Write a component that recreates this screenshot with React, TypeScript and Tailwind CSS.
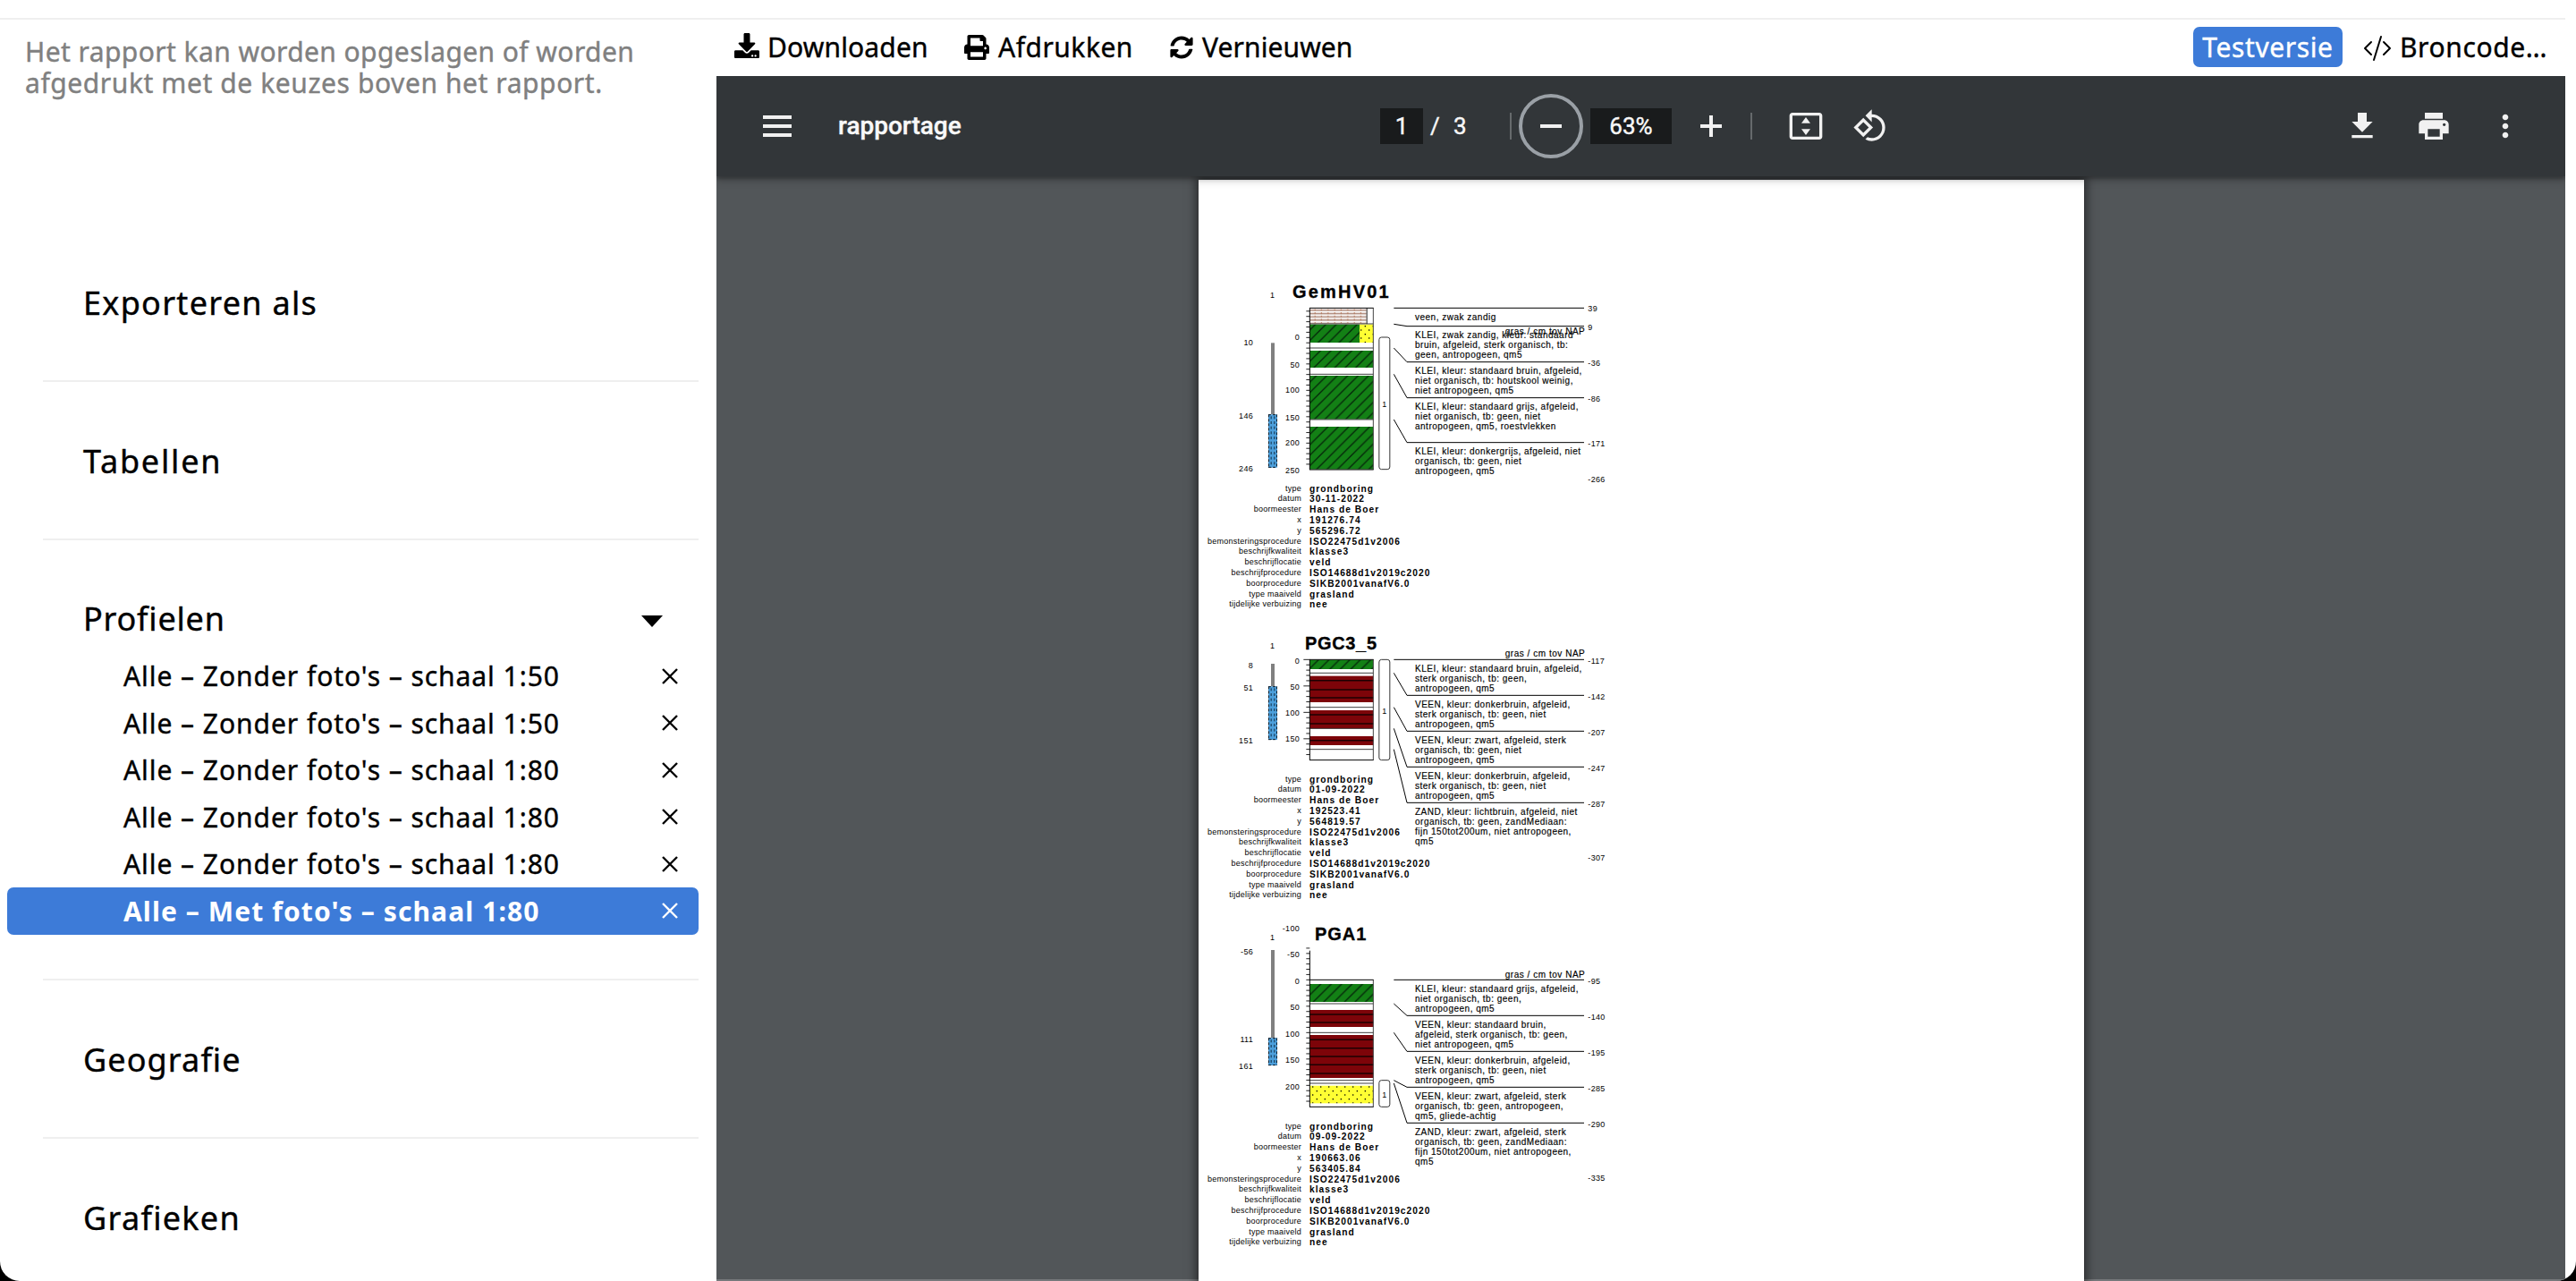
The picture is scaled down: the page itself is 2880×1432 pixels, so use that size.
import React from "react";
import { FaDownload, FaPrint, FaSyncAlt } from "react-icons/fa";
import { BsCodeSlash } from "react-icons/bs";

type Item = { label: string; active?: boolean };

const profiles: Item[] = [
  { label: "Alle – Zonder foto's – schaal 1:50" },
  { label: "Alle – Zonder foto's – schaal 1:50" },
  { label: "Alle – Zonder foto's – schaal 1:80" },
  { label: "Alle – Zonder foto's – schaal 1:80" },
  { label: "Alle – Zonder foto's – schaal 1:80" },
  { label: "Alle – Met foto's – schaal 1:80", active: true },
];

function Cross() {
  return (
    <svg viewBox="0 0 18 18" className="h-[18px] w-[18px]" fill="none" stroke="currentColor" strokeWidth="2.4">
      <path d="M1 1l16 16M17 1L1 17" />
    </svg>
  );
}

function NavSection({ label, spacing }: { label: string; spacing: string }) {
  return (
    <div className="ml-[48px] mr-[20px] flex h-[177px] items-center border-b-2 border-[#efefef] pl-[45px] pt-[2px] text-[36px]">
      <span className={spacing}>{label}</span>
    </div>
  );
}

function Sidebar() {
  return (
    <aside className="flex w-[801px] shrink-0 flex-col [-webkit-text-stroke:0.4px]">
      <p className="h-[228px] whitespace-nowrap pl-[28px] pt-[18px] text-[30px] leading-[35.3px] tracking-[0.42px] text-[#808080]">
        Het rapport kan worden opgeslagen of worden
        <br />
        <span className="tracking-[0.58px]">afgedrukt met de keuzes boven het rapport.</span>
      </p>
      <NavSection label="Exporteren als" spacing="tracking-[1.3px]" />
      <NavSection label="Tabellen" spacing="tracking-[1.8px]" />
      <div>
        <div className="flex h-[125.5px] items-center justify-between pl-[93px] pr-[60px] pt-[51px] text-[36px] tracking-[0.8px]">
          <span>Profielen</span>
          <svg viewBox="0 0 24 13" className="mt-[4px] h-[13px] w-[24px]">
            <path d="M0 0h24L12 13z" />
          </svg>
        </div>
        <ul className="ml-[8px] mr-[20px]">
          {profiles.map((p, i) => (
            <li
              key={i}
              className={
                p.active
                  ? "flex h-[52.5px] items-center justify-between rounded-[7px] bg-[#3d7bd8] pl-[130px] pr-[23px] text-[30px] font-bold tracking-[1.1px] text-white [-webkit-text-stroke:0]"
                  : "flex h-[52.5px] items-center justify-between pl-[130px] pr-[23px] text-[30px] tracking-[0.95px]"
              }
            >
              <span>{p.label}</span>
              <Cross />
            </li>
          ))}
        </ul>
        <div className="ml-[48px] mr-[20px] h-[51.5px] border-b-2 border-[#efefef]" />
      </div>
      <NavSection label="Geografie" spacing="tracking-[1.1px]" />
      <div className="pl-[93px] pt-[62px] text-[36px] tracking-[1.3px]">Grafieken</div>
    </aside>
  );
}

function ActionBar() {
  return (
    <div className="flex h-[63px] items-center whitespace-nowrap pb-[3px] pl-[20px] text-[30px] [-webkit-text-stroke:0.4px]">
      <FaDownload className="mb-[2px] h-[28px] w-[28px]" />
      <span className="ml-[9px] w-[220px] tracking-[0.15px]">Downloaden</span>
      <FaPrint className="mt-[2px] h-[28px] w-[28px]" />
      <span className="ml-[10px] w-[192px] tracking-[0.5px]">Afdrukken</span>
      <FaSyncAlt className="mt-[2px] h-[26px] w-[26px]" />
      <span className="ml-[10px] tracking-[0.1px]">Vernieuwen</span>
      <span className="ml-auto flex h-[45px] w-[167px] items-center justify-center rounded-[7px] bg-[#3d7bd8] tracking-[0.6px] text-white">
        Testversie
      </span>
      <BsCodeSlash className="ml-[23px] mt-[4px] h-[32px] w-[32px]" />
      <span className="ml-[9px] w-[185px] tracking-[0.6px]">Broncode…</span>
    </div>
  );
}

function ToolIcon({ d, box = "0 0 24 24" }: { d: string; box?: string }) {
  return (
    <svg viewBox={box} className="h-[40px] w-[40px] shrink-0 fill-[#f1f1f1]">
      <path d={d} fillRule="evenodd" />
    </svg>
  );
}

function PdfToolbar() {
  return (
    <div className="relative z-10 flex h-[112px] shrink-0 items-center bg-[#323639] pl-[48px] pr-[47px] font-[Roboto,sans-serif] text-[26px] text-[#f8f8f8] shadow-[0_-4px_8px_rgba(0,0,0,0.09),0_6px_8px_rgba(0,0,0,0.15),0_3px_4px_rgba(0,0,0,0.25)]">
      <ToolIcon box="0 0 20 20" d="M2 4h16v2H2zM2 9h16v2H2zM2 14h16v2H2z" />
      <span className="ml-[48px] w-[606px] text-[28px] font-medium [-webkit-text-stroke:0.4px]">rapportage</span>
      <span className="flex h-[40px] w-[48px] items-center justify-center bg-[#191b1c] [-webkit-text-stroke:0.4px]">1</span>
      <span className="ml-[8px] w-[26px] [-webkit-text-stroke:0.4px]">/</span>
      <span className="w-[63px] [-webkit-text-stroke:0.4px]">3</span>
      <span className="h-[30px] w-[2px] bg-[#666a6c]" />
      <span className="ml-[8px] flex h-[72px] w-[72px] items-center justify-center rounded-full border-4 border-[#9aa0a6]">
        <ToolIcon box="0 0 20 20" d="M4 9h12v2H4z" />
      </span>
      <span className="ml-[8px] flex h-[40px] w-[91px] items-center justify-center bg-[#191b1c] [-webkit-text-stroke:0.4px]">63%</span>
      <span className="ml-[24px] flex">
        <ToolIcon box="0 0 20 20" d="M16 11h-5v5H9v-5H4V9h5V4h2v5h5z" />
      </span>
      <span className="ml-[24px] h-[30px] w-[2px] bg-[#666a6c]" />
      <span className="ml-[40px] flex gap-[32px]">
        <ToolIcon d="M21 3H3c-1.1 0-2 .9-2 2v14c0 1.1.9 2 2 2h18c1.100 0 2-.9 2-2V5c0-1.100-.9-2-2-2zm0 16H3V5h18zM12 6l3 4H9zM12 18l-3-4h6z" />
        <ToolIcon d="M7.340 6.410L.86 12.900l6.490 6.480 6.490-6.480-6.500-6.490zM3.690 12.900l3.660-3.660L11 12.900l-3.660 3.660-3.650-3.660zm15.670-6.260C17.610 4.880 15.300 4 13 4V.76L8.760 5 13 9.240V6c1.790 0 3.580.68 4.950 2.050 2.730 2.730 2.730 7.170 0 9.900C16.580 19.320 14.790 20 13 20c-.97 0-1.940-.21-2.840-.61l-1.490 1.490C10.020 21.620 11.510 22 13 22c2.300 0 4.610-.88 6.360-2.640 3.520-3.510 3.520-9.210 0-12.720z" />
      </span>
      <span className="ml-auto flex gap-[40px]">
        <ToolIcon d="M5 20h14v-2H5v2zM19 9h-4V3H9v6H5l7 7 7-7z" />
        <ToolIcon d="M19 8H5c-1.660 0-3 1.340-3 3v6h4v4h12v-4h4v-6c0-1.660-1.340-3-3-3zm-3 11H8v-5h8v5zm3-7c-.55 0-1-.45-1-1s.45-1 1-1 1 .45 1 1-.45 1-1 1zm-1-9H6v4h12V3z" />
        <ToolIcon d="M12 8c1.100 0 2-.9 2-2s-.9-2-2-2-2 .9-2 2 .9 2 2 2zm0 2c-1.100 0-2 .9-2 2s.9 2 2 2 2-.9 2-2-.9-2-2-2zm0 6c-1.100 0-2 .9-2 2s.9 2 2 2 2-.9 2-2-.9-2-2-2z" />
      </span>
    </div>
  );
}

type Layer = { kind: "klei" | "veen" | "zand" | "veenZandig"; y: number; h: number; x?: number; w?: number };
type Note = { from: number; to: number; lines: string[]; first?: number };
type Bore = {
  name: string;
  nameX: number;
  nameY: number;
  nameW: number;
  tubeLabelY: number;
  tube: [number, number, number];
  tubeMarks: [string, number][];
  axis: [number, number];
  ticks: [number, number, number];
  longTicks?: boolean;
  depths: [string, number][];
  column: [number, number];
  layers: Layer[];
  rules: number[];
  bands: number[];
  sample: [number, number];
  surfaceY: number;
  notes: Note[];
  levels: [string, number][];
  meta: string[];
};

const metaLabels = [
  "type",
  "datum",
  "boormeester",
  "x",
  "y",
  "bemonsteringsprocedure",
  "beschrijfkwaliteit",
  "beschrijflocatie",
  "beschrijfprocedure",
  "boorprocedure",
  "type maaiveld",
  "tijdelijke verbuizing",
];

const metaOf = (datum: string, x: string, y: string) => [
  "grondboring",
  datum,
  "Hans de Boer",
  x,
  y,
  "ISO22475d1v2006",
  "klasse3",
  "veld",
  "ISO14688d1v2019c2020",
  "SIKB2001vanafV6.0",
  "grasland",
  "nee",
];

// Chart coordinates are in thirds of a pixel.
const bores: Bore[] = [
  {
    name: "GemHV01",
    nameX: 330,
    nameY: 98,
    nameW: 324,
    tubeLabelY: 98,
    tube: [250, 490, 668],
    tubeMarks: [["10", 259], ["146", 503], ["246", 680]],
    axis: [133, 675],
    ticks: [232, -5, 24],
    depths: [["0", 241], ["50", 332], ["100", 418], ["150", 509], ["200", 595], ["250", 686]],
    column: [133, 675],
    layers: [
      { kind: "veenZandig", y: 136, h: 49, w: 190 },
      { kind: "klei", y: 188, h: 61, w: 167 },
      { kind: "zand", y: 188, h: 61, x: 555, w: 46 },
      { kind: "klei", y: 276, h: 57 },
      { kind: "klei", y: 360, h: 146 },
      { kind: "klei", y: 531, h: 143 },
    ],
    rules: [186, 267, 355, 507],
    bands: [],
    sample: [231, 674],
    surfaceY: 221,
    notes: [
      { from: 133, to: 133, first: 173, lines: ["veen, zwak zandig"] },
      { from: 187, to: 194, lines: ["KLEI, zwak zandig, kleur: standaard", "bruin, afgeleid, sterk organisch, tb:", "geen, antropogeen, qm5"] },
      { from: 267, to: 314, lines: ["KLEI, kleur: standaard bruin, afgeleid,", "niet organisch, tb: houtskool weinig,", "niet antropogeen, qm5"] },
      { from: 355, to: 434, lines: ["KLEI, kleur: standaard grijs, afgeleid,", "niet organisch, tb: geen, niet", "antropogeen, qm5, roestvlekken"] },
      { from: 507, to: 584, lines: ["KLEI, kleur: donkergrijs, afgeleid, niet", "organisch, tb: geen, niet", "antropogeen, qm5"] },
    ],
    levels: [["39", 145], ["9", 206], ["-36", 326], ["-86", 446], ["-171", 596], ["-266", 716]],
    meta: metaOf("30-11-2022", "191276.74", "565296.72"),
  },
  {
    name: "PGC3_5",
    nameX: 372,
    nameY: 107,
    nameW: 241,
    tubeLabelY: 106,
    tube: [156, 232, 411],
    tubeMarks: [["8", 170], ["51", 246], ["151", 422]],
    axis: [142, 479],
    ticks: [142, 0, 18],
    longTicks: true,
    depths: [["0", 155], ["50", 242], ["100", 331], ["150", 418]],
    column: [142, 479],
    layers: [
      { kind: "klei", y: 143, h: 31 },
      { kind: "veen", y: 197, h: 88 },
      { kind: "veen", y: 312, h: 61 },
      { kind: "veen", y: 399, h: 30 },
    ],
    rules: [187, 302, 373, 443],
    bands: [212, 243, 270, 327, 357, 413],
    sample: [142, 479],
    surfaceY: 131,
    notes: [
      { from: 142, to: 142, lines: ["KLEI, kleur: standaard bruin, afgeleid,", "sterk organisch, tb: geen,", "antropogeen, qm5"] },
      { from: 187, to: 262, lines: ["VEEN, kleur: donkerbruin, afgeleid,", "sterk organisch, tb: geen, niet", "antropogeen, qm5"] },
      { from: 302, to: 382, lines: ["VEEN, kleur: zwart, afgeleid, sterk", "organisch, tb: geen, niet", "antropogeen, qm5"] },
      { from: 373, to: 502, lines: ["VEEN, kleur: donkerbruin, afgeleid,", "sterk organisch, tb: geen, niet", "antropogeen, qm5"] },
      { from: 443, to: 622, lines: ["ZAND, kleur: lichtbruin, afgeleid, niet", "organisch, tb: geen, zandMediaan:", "fijn 150tot200um, niet antropogeen,", "qm5"] },
    ],
    levels: [["-117", 155], ["-142", 275], ["-207", 395], ["-247", 515], ["-287", 635], ["-307", 815]],
    meta: metaOf("01-09-2022", "192523.41", "564819.57"),
  },
  {
    name: "PGA1",
    nameX: 405,
    nameY: 93,
    nameW: 173,
    tubeLabelY: 92,
    tube: [126, 421, 513],
    tubeMarks: [["-56", 140], ["111", 435], ["161", 525]],
    axis: [128, 652],
    ticks: [226, -6, 23],
    depths: [["-100", 62], ["-50", 149], ["0", 240], ["50", 326], ["100", 416], ["150", 503], ["200", 594]],
    column: [226, 652],
    layers: [
      { kind: "klei", y: 240, h: 60 },
      { kind: "veen", y: 327, h: 57 },
      { kind: "veen", y: 411, h: 144 },
      { kind: "zand", y: 581, h: 59 },
    ],
    rules: [306, 403, 563, 573],
    bands: [342, 369, 427, 455, 483, 511, 540],
    sample: [563, 652],
    surfaceY: 219,
    notes: [
      { from: 226, to: 226, lines: ["KLEI, kleur: standaard grijs, afgeleid,", "niet organisch, tb: geen,", "antropogeen, qm5"] },
      { from: 306, to: 346, lines: ["VEEN, kleur: standaard bruin,", "afgeleid, sterk organisch, tb: geen,", "niet antropogeen, qm5"] },
      { from: 403, to: 466, lines: ["VEEN, kleur: donkerbruin, afgeleid,", "sterk organisch, tb: geen, niet", "antropogeen, qm5"] },
      { from: 563, to: 586, lines: ["VEEN, kleur: zwart, afgeleid, sterk", "organisch, tb: geen, antropogeen,", "qm5, gliede-achtig"] },
      { from: 573, to: 706, lines: ["ZAND, kleur: zwart, afgeleid, sterk", "organisch, tb: geen, zandMediaan:", "fijn 150tot200um, niet antropogeen,", "qm5"] },
    ],
    levels: [["-95", 239], ["-140", 359], ["-195", 479], ["-285", 599], ["-290", 719], ["-335", 900]],
    meta: metaOf("09-09-2022", "190663.06", "563405.84"),
  },
];

const fills = {
  klei: "url(#klei)",
  veen: "#7d0409",
  zand: "url(#zand)",
  veenZandig: "url(#veenZandig)",
};

function Patterns() {
  return (
    <defs>
      <pattern id="klei" width="35" height="35" patternUnits="userSpaceOnUse">
        <rect width="35" height="35" fill="#138015" />
        <path d="M-5 40L40 -5M-5 5L5 -5M30 40L40 30" stroke="#04250a" strokeWidth="4" />
      </pattern>
      <pattern id="zand" width="27" height="27" patternUnits="userSpaceOnUse">
        <rect width="27" height="27" fill="#ffff33" />
        <rect x="5" y="3" width="4" height="4" />
        <rect x="18" y="16" width="4" height="4" />
      </pattern>
      <pattern id="veenZandig" x="388" y="136" width="22" height="11" patternUnits="userSpaceOnUse">
        <rect width="22" height="11" fill="#fff" />
        <rect y="2" width="22" height="5" fill="#b08c7e" />
        <rect x="16" width="2.500" height="6" fill="#b06a48" />
      </pattern>
    </defs>
  );
}

function Tube({ top, water, bottom }: { top: number; water: number; bottom: number }) {
  return (
    <g>
      <rect x="258" y={top} width="12" height={water - top} fill="#808080" />
      <rect x="249" y={water} width="30" height={bottom - water} fill="#4c9fdb" />
      <path
        d={`M250.5 ${water}V${bottom}M277.500 ${water}V${bottom}M249 ${water + 1}H279M249 ${bottom - 1}H279`}
        stroke="#0b1c2b"
        strokeWidth="3"
        strokeDasharray="9 6"
      />
      <path
        d={`M258.500 ${water + 6}V${bottom}M269.500 ${water + 6}V${bottom}`}
        stroke="#0b1c2b"
        strokeWidth="2.6"
        strokeDasharray="9 8"
      />
    </g>
  );
}

function BoreChart({ b, first }: { b: Bore; first: boolean }) {
  const [c0, c1] = b.column;
  const ticks: number[] = [];
  for (let k = b.ticks[1]; k <= b.ticks[2]; k++) ticks.push(k);
  return (
    <svg
      viewBox="15 0 1425 720"
      className="block h-[240px] w-[475px] overflow-visible font-[Liberation_Sans,Arial,sans-serif] text-[27px] tracking-[0.9px]"
    >
      {first && <Patterns />}
      <text x="263" y={b.tubeLabelY} textAnchor="middle">1</text>
      <text x={b.nameX} y={b.nameY} textLength={b.nameW} className="text-[60px] font-bold [stroke-width:1px] [stroke:#000]">
        {b.name}
      </text>
      <Tube top={b.tube[0]} water={b.tube[1]} bottom={b.tube[2]} />
      {b.tubeMarks.map(([t, y]) => (
        <text key={t} x="198" y={y} textAnchor="end">{t}</text>
      ))}
      {b.depths.map(([t, y]) => (
        <text key={t} x="354" y={y} textAnchor="end">{t}</text>
      ))}
      {b.layers.map((l, i) => (
        <rect key={i} x={l.x ?? 388} y={l.y} width={l.w ?? 213} height={l.h} fill={fills[l.kind]} />
      ))}
      {first && <path d="M579.500 133V186" stroke="#222" strokeWidth="3" />}
      {b.bands.map((y) => (
        <path key={y} d={`M388 ${y}H601`} stroke="#1c0002" strokeWidth="4.500" />
      ))}
      {b.rules.map((y) => (
        <path key={y} d={`M388 ${y}H601`} stroke="#222" strokeWidth="2.600" />
      ))}
      <path d={`M601 ${c0}V${c1}`} stroke="#444" strokeWidth="3" />
      <path d={`M387 ${c0}H602M387 ${c1}H602M388 ${b.axis[0]}V${b.axis[1]}`} stroke="#000" strokeWidth="3" />
      {ticks.map((k) => {
        const y = b.ticks[0] + k * 17.7;
        return <path key={k} d={`M${b.longTicks && k % 5 === 0 ? 367 : 376} ${y}H388`} stroke="#000" strokeWidth="2.600" />;
      })}
      <rect
        x="620.5"
        y={b.sample[0]}
        width="36"
        height={b.sample[1] - b.sample[0]}
        rx="8"
        fill="#fff"
        stroke="#333"
        strokeWidth="3"
      />
      <text x="639" y={(b.sample[0] + b.sample[1]) / 2 + 12} textAnchor="middle">1</text>
      {b.notes.map((n) => (
        <g key={n.to}>
          <path d={`M670 ${n.from}L714 ${n.to}H1308`} fill="none" stroke="#000" strokeWidth="3" />
          {n.lines.map((t, i) => (
            <text
              key={i}
              x="741"
              y={(n.first ?? n.to + 40) + i * 33.2}
              className="text-[30px] tracking-[1.5px] [stroke-width:0.5px] [stroke:#000]"
            >
              {t}
            </text>
          ))}
        </g>
      ))}
      <text x="1312" y={b.surfaceY} textAnchor="end" className="text-[30px] tracking-[1.6px] [stroke-width:0.5px] [stroke:#000]">
        gras / cm tov NAP
      </text>
      {b.levels.map(([t, y]) => (
        <text key={t} x="1321" y={y} className="tracking-[1px]">{t}</text>
      ))}
    </svg>
  );
}

const sectionClass = ["h-[390px]", "h-[330px]", "h-[412px]"];
const chartClass = ["h-[240.5px]", "h-[175.5px]", "h-[233.5px]"];

function Page() {
  return (
    <div className="relative ml-[539px] mt-[4px] h-[1300px] w-[990px] shrink-0 bg-white pt-[99px] text-black shadow-[0_0_10px_3px_rgba(0,0,0,0.5)]">
      {bores.map((b, i) => (
        <section key={b.name} className={sectionClass[i]}>
          <div className={chartClass[i]}>
            <BoreChart b={b} first={i === 0} />
          </div>
          <dl className="grid grid-cols-[115px_1fr] gap-x-[9px] whitespace-nowrap font-[Liberation_Sans,Arial,sans-serif] leading-[11.82px]">
            {metaLabels.map((m, k) => (
              <React.Fragment key={m}>
                <dt className="text-right text-[9px] tracking-[0.25px]">{m}</dt>
                <dd className="text-[10.2px] font-bold tracking-[1.05px]">{b.meta[k]}</dd>
              </React.Fragment>
            ))}
          </dl>
        </section>
      ))}
    </div>
  );
}

export default function App() {
  return (
    <div className="h-[1432px] w-[2880px] overflow-hidden bg-black">
      <div className="flex h-[1432px] flex-col overflow-hidden rounded-b-[22px] bg-white pr-[12px] font-[Noto_Sans,sans-serif] text-black">
        <div className="h-[22px] shrink-0 border-b-2 border-[#efefef]" />
        <div className="flex h-[1410px]">
          <Sidebar />
          <main className="flex h-[1410px] min-w-0 flex-1 flex-col">
            <ActionBar />
            <div className="flex h-[1347px] flex-col overflow-hidden bg-[#525659]">
              <PdfToolbar />
              <div className="h-[1235px] overflow-hidden shadow-[inset_0_-2px_0_#75787b]">
                <Page />
              </div>
            </div>
          </main>
        </div>
      </div>
    </div>
  );
}
